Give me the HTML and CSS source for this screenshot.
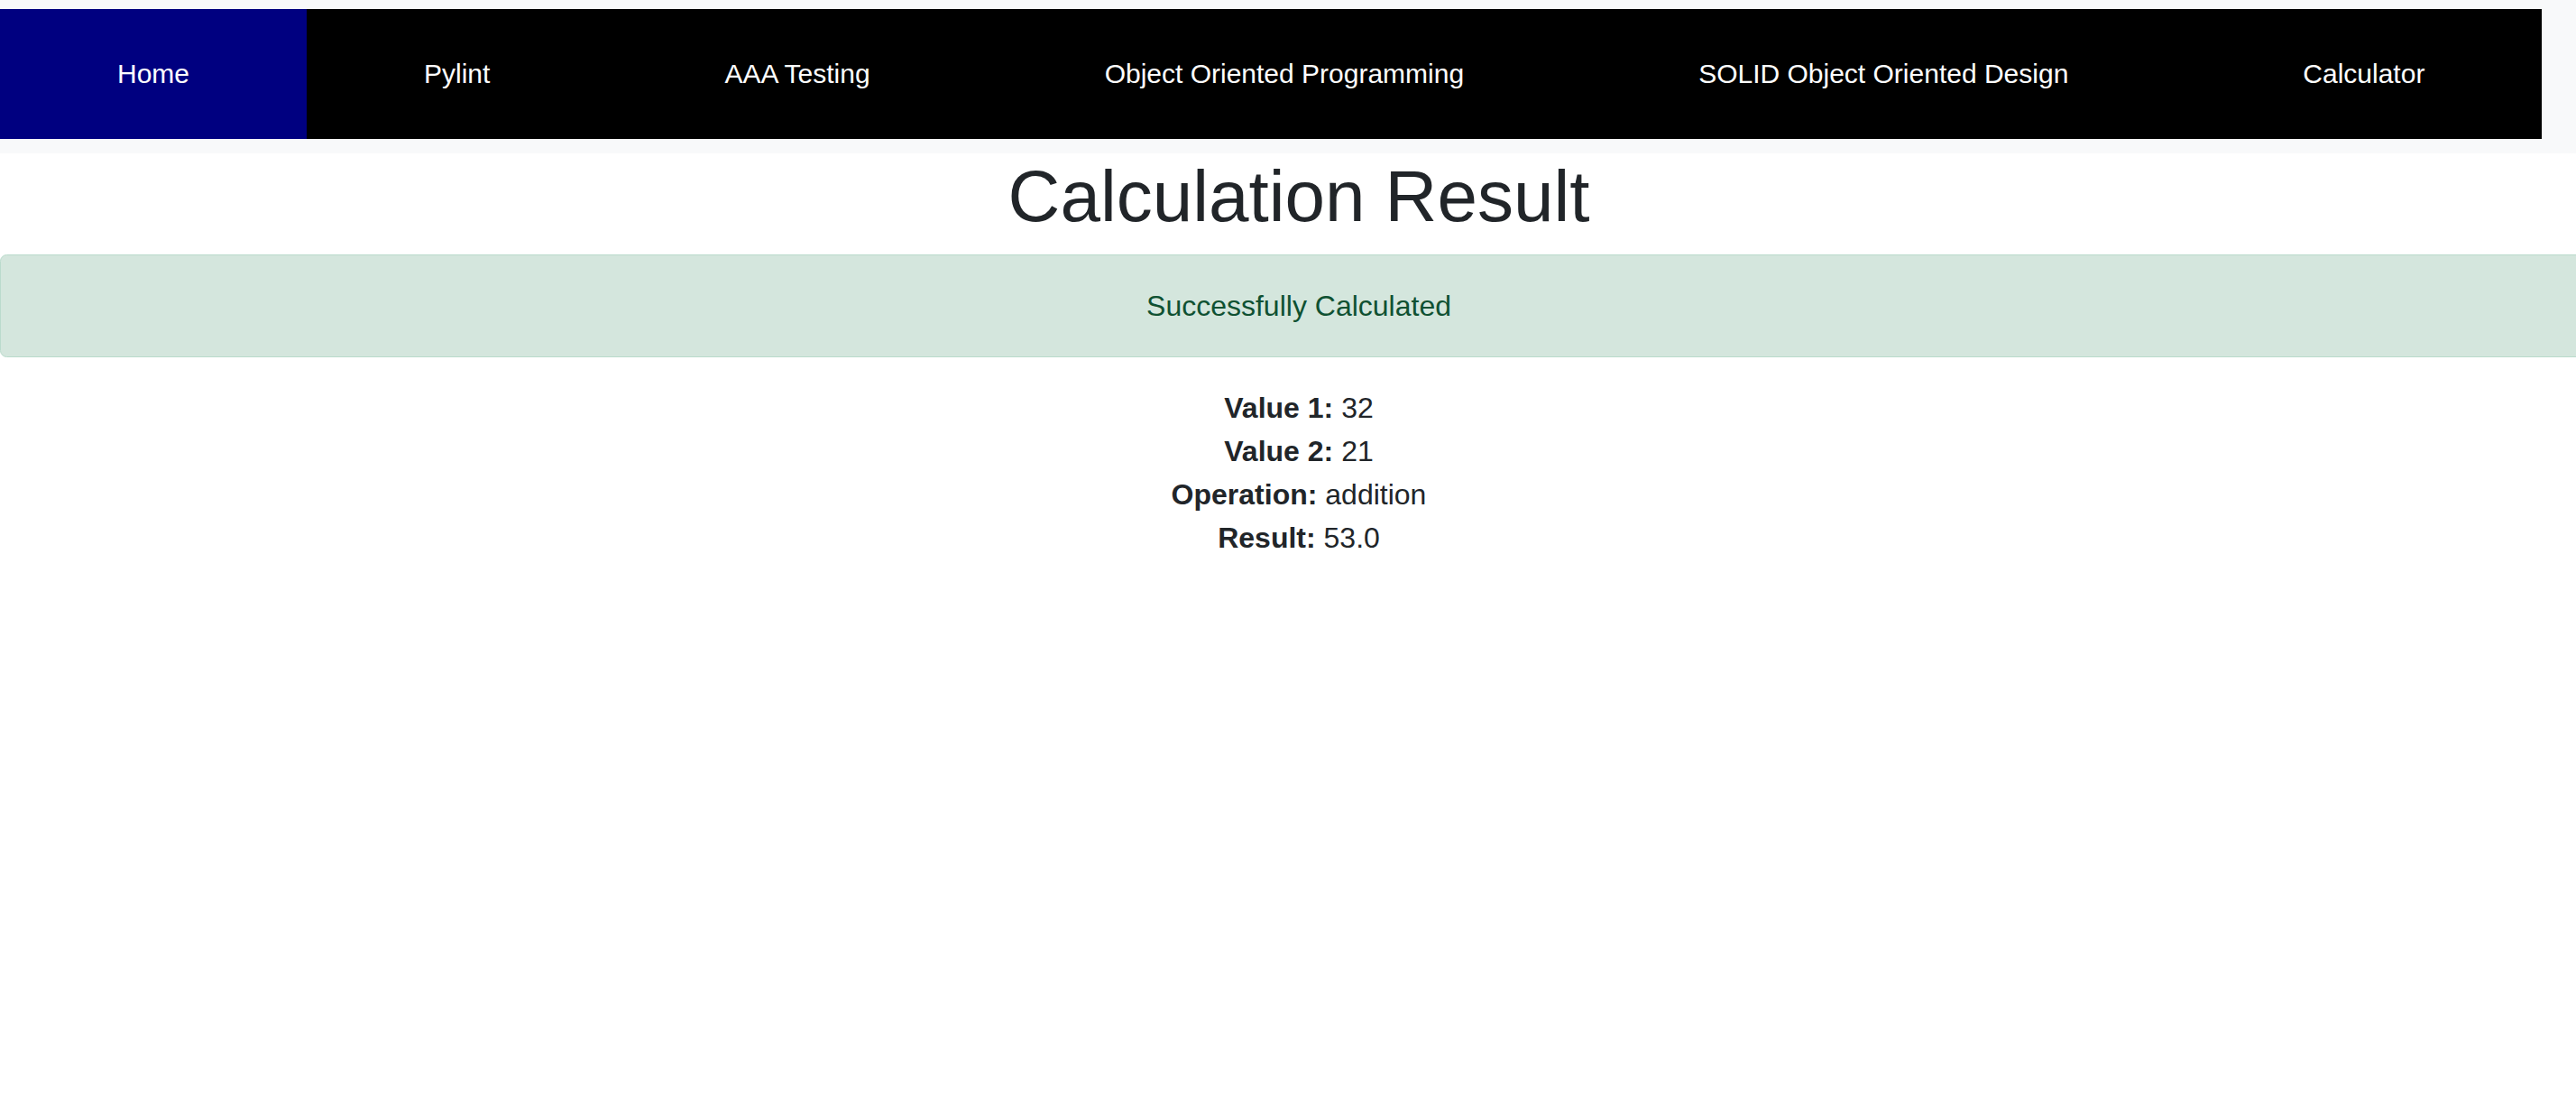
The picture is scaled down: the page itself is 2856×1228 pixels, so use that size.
FILE: index.html
```html
<!DOCTYPE html>
<html lang="en">
<head>
<meta charset="utf-8">
<title>Calculation Result</title>
<link rel="stylesheet" href="styles.css">
</head>
<body>
<div class="page">
  <nav class="navbar">
    <ul class="nav-list">
      <li class="nav-item active"><a href="#">Home</a></li>
      <li class="nav-item"><a href="#">Pylint</a></li>
      <li class="nav-item"><a href="#">AAA Testing</a></li>
      <li class="nav-item"><a href="#">Object Oriented Programming</a></li>
      <li class="nav-item"><a href="#">SOLID Object Oriented Design</a></li>
      <li class="nav-item"><a href="#">Calculator</a></li>
    </ul>
  </nav>
  <main class="content">
    <h1 class="title">Calculation Result</h1>
    <div class="alert">Successfully Calculated</div>
    <div class="details">
      <p><strong>Value 1:</strong> 32</p>
      <p><strong>Value 2:</strong> 21</p>
      <p><strong>Operation:</strong> addition</p>
      <p><strong>Result:</strong> 53.0</p>
    </div>
  </main>
</div>
</body>
</html>
```
FILE: styles.css
```css
html {
  overflow-x: hidden;
}
body {
  margin: 0;
  font-family: "Liberation Sans", Arial, Helvetica, sans-serif;
  color: #212529;
  background: #fff;
}
.page {
  width: calc(100% + 24px);
}
.navbar {
  background: #f8f9fa;
  padding: 10px 0 16px;
}
.nav-list {
  display: flex;
  width: max-content;
  margin: 0;
  padding: 0;
  list-style: none;
  background: #000;
}
.nav-item a {
  display: block;
  padding: 48px 130px;
  line-height: 48px;
  font-size: 30px;
  color: #fff;
  text-decoration: none;
}
.nav-item.active a {
  background: #000080;
}
.content {
  text-align: center;
}
.title {
  margin: 0 0 16px;
  font-size: 80px;
  font-weight: 400;
  line-height: 1.2;
}
.alert {
  margin-bottom: 32px;
  padding: 32px;
  font-size: 32px;
  line-height: 48px;
  color: #0f5132;
  background: #d4e6dd;
  border: 1px solid #badbcc;
  border-radius: 7.5px;
}
.details p {
  margin: 0;
  font-size: 32px;
  line-height: 48px;
}
.details strong {
  font-weight: 700;
}
```
